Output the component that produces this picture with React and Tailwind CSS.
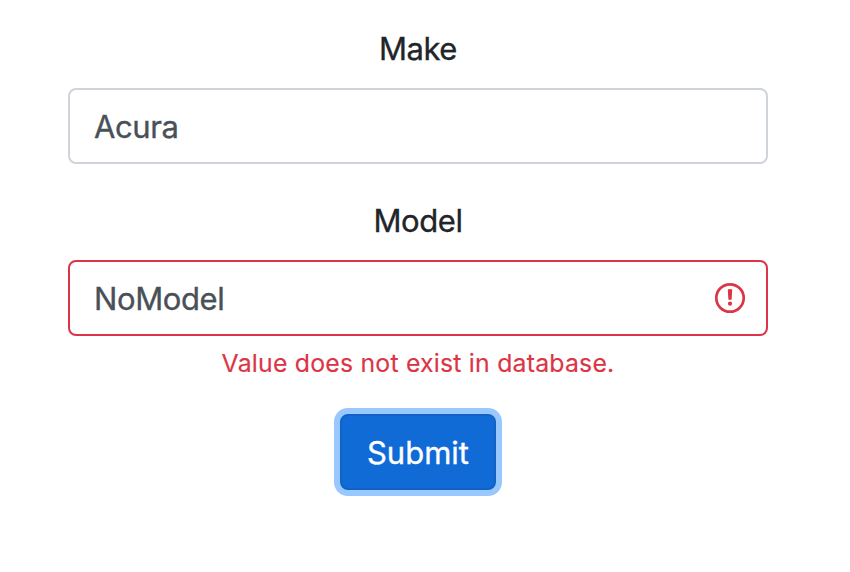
const labelStyle = "mb-[15px] text-[31px] leading-[48px] tracking-[-0.45px]"

const inputStyle =
  "block h-[76px] w-full rounded-[8px] border-2 bg-white pl-[24px] pr-[80px] text-[31px] leading-[48px] tracking-[-0.4px] text-[#495057] outline-none"

const ErrorIcon = () => (
  <svg
    className="pointer-events-none absolute right-[22px] top-[22px] size-[32px]"
    viewBox="0 0 32 32"
    fill="none"
  >
    <circle cx="16" cy="16" r="13.7" stroke="#dc3545" strokeWidth="2.7" />
    <path
      d="M14.4 7.8h3.2l-.6 9.4h-2z"
      fill="#dc3545"
      stroke="#dc3545"
      strokeWidth="1.2"
      strokeLinejoin="round"
    />
    <circle cx="16" cy="21.7" r="2.1" fill="#dc3545" />
  </svg>
)

const App = () => {
  return (
    <form
      className="ml-[68px] flex min-h-[572px] w-[700px] flex-col items-center pt-[25px] font-['Inter',sans-serif] text-[#212529] [-webkit-text-stroke:0.35px]"
      onSubmit={(e) => e.preventDefault()}
    >
      <label htmlFor="make" className={labelStyle}>
        Make
      </label>
      <input id="make" defaultValue="Acura" className={`${inputStyle} border-[#ced4da]`} />

      <label htmlFor="model" className={`${labelStyle} mt-[33px]`}>
        Model
      </label>
      <div className="relative w-full">
        <input id="model" defaultValue="NoModel" className={`${inputStyle} border-[#dc3545]`} />
        <ErrorIcon />
      </div>
      <p className="mt-[8px] text-[24.8px] leading-[38px] tracking-[0.22px] text-[#dc3545] [-webkit-text-stroke:0.15px]">
        Value does not exist in database.
      </p>

      <button
        type="submit"
        className="mt-[32px] h-[76px] w-[156px] rounded-[8px] border-2 border-[#1062c6] bg-[#116bd6] pt-px text-[31px] leading-[48px] text-white ring-[6px] ring-[#99c8ff]"
      >
        Submit
      </button>
    </form>
  )
}

export default App
